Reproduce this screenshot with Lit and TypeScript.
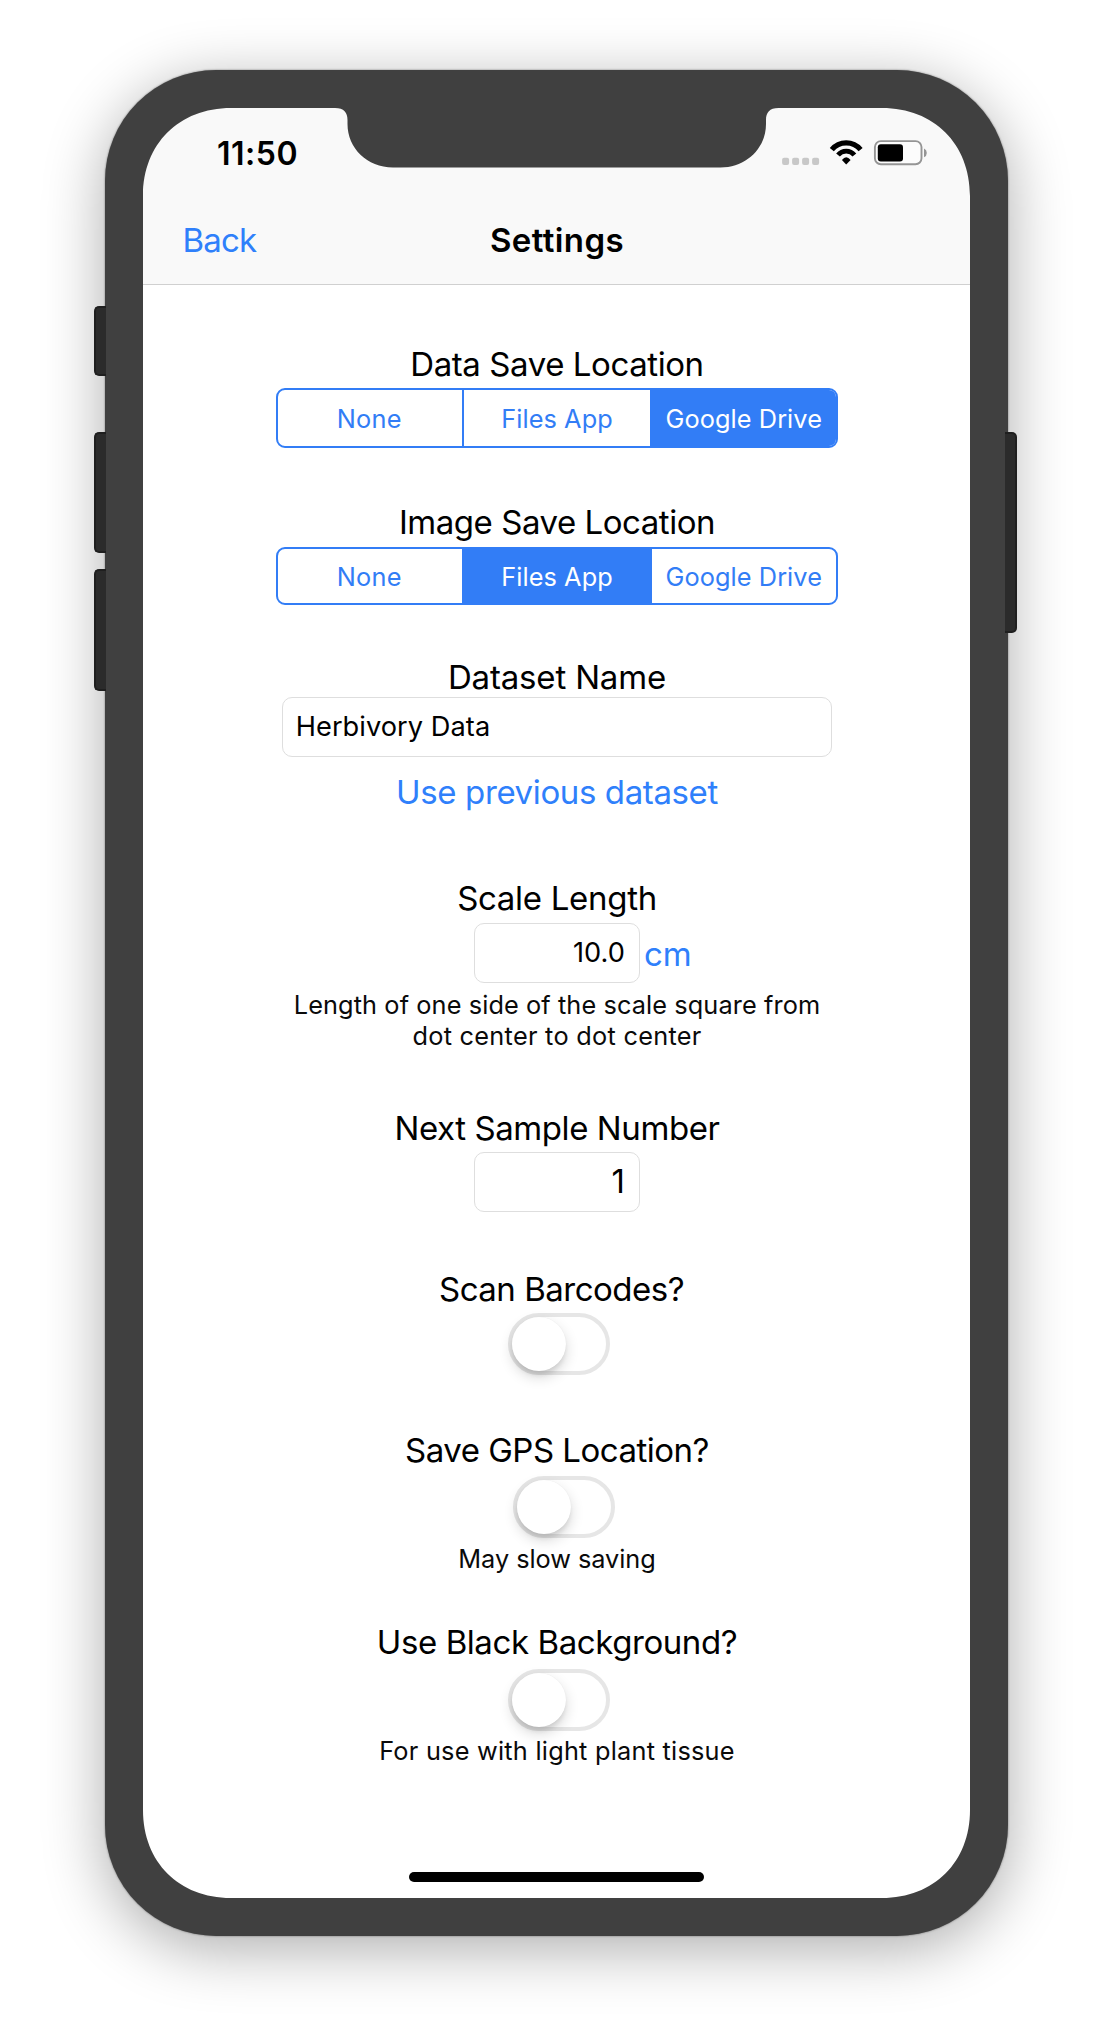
import { LitElement, html, css, svg } from "lit";
import { customElement, property, state } from "lit/decorators.js";
import { classMap } from "lit/directives/class-map.js";

@customElement("segmented-control")
export class SegmentedControl extends LitElement {
  @property({ attribute: false }) options: string[] = [];
  @property({ type: Number }) selected = 0;

  static styles = css`
    :host { display: block; }
    .track {
      box-sizing: border-box;
      width: 561.5px;
      height: 100%;
      display: grid;
      grid-template-columns: 184px 1fr 186px;
      border: 2px solid #327df6;
      border-radius: 9px;
      overflow: hidden;
      background: #fff;
    }
    .segment {
      display: flex;
      align-items: center;
      justify-content: center;
      border: 0;
      border-left: 2px solid #327df6;
      margin: 0;
      padding: 0;
      background: transparent;
      color: #327df6;
      font: 400 25.3px Inter, "Liberation Sans", sans-serif;
      letter-spacing: 0.08px;
    }
    .segment:first-child { border-left: 0; padding-right: 2px; letter-spacing: 0.28px; }
    .on { background: #327df6; color: #fff; }
  `;

  render() {
    return html`<div class="track">
      ${this.options.map((label, i) => html`<button
        class=${classMap({ segment: true, on: i === this.selected })}
        @click=${() => { this.selected = i; }}>${label}</button>`)}
    </div>`;
  }
}

@customElement("toggle-switch")
export class ToggleSwitch extends LitElement {
  @property({ type: Boolean }) on = false;

  static styles = css`
    :host { display: block; }
    .track {
      box-sizing: border-box;
      width: 102px;
      height: 62px;
      border: 4px solid #e6e6e6;
      border-radius: 31px;
      background: #fff;
      display: flex;
      cursor: pointer;
    }
    .knob {
      width: 54px;
      height: 54px;
      border-radius: 50%;
      background: #fff;
      box-shadow: 0 6px 14px rgba(0, 0, 0, 0.16), 0 5px 4px -1px rgba(0, 0, 0, 0.08), 0 0 1px rgba(0, 0, 0, 0.08);
    }
    .checked { justify-content: flex-end; background: #4cd964; }
  `;

  render() {
    return html`<div class=${classMap({ track: true, checked: this.on })}
      @click=${() => { this.on = !this.on; }}><div class="knob"></div></div>`;
  }
}

@customElement("app-root")
export class AppRoot extends LitElement {
  @state() private destinations = ["None", "Files App", "Google Drive"];

  static styles = css`
    :host {
      display: block;
      box-sizing: border-box;
      width: 1112px;
      height: 2038px;
      padding: 70px 0 0 105px;
      overflow: hidden;
      background: #fff;
      color: #000;
      font-family: Inter, "Liberation Sans", sans-serif;
    }
    .device {
      position: relative;
      box-sizing: border-box;
      width: 902.5px;
      height: 1866px;
      padding: 38px 37.5px 38px 38px;
      border-radius: 111px;
      background: #404040;
      box-shadow: 0 0 2px rgba(0, 0, 0, 0.5), 0 13px 62px rgba(0, 0, 0, 0.33);
    }
    .side {
      position: absolute;
      box-sizing: border-box;
      width: 12px;
      background: #2b2b2b;
      border: 2px solid #1f1f1f;
    }
    .left { left: -11px; border-right: 0; border-radius: 5px 0 0 5px; }
    .right { right: -9.5px; border-left: 0; border-radius: 0 5px 5px 0; }
    .mute { top: 236px; height: 70px; }
    .vol-up { top: 362px; height: 121px; }
    .vol-down { top: 499px; height: 122px; }
    .power { top: 362px; height: 201px; }
    .screen {
      width: 827px;
      height: 1790px;
      display: flex;
      flex-direction: column;
      background: #fff;
    }
    .bezel {
      position: absolute;
      left: 38px;
      top: 38px;
      pointer-events: none;
    }
    header {
      box-sizing: border-box;
      height: 177px;
      background: #f9f9f9;
      border-bottom: 1px solid #d0d0d0;
    }
    .status {
      box-sizing: border-box;
      height: 88px;
      padding: 25px 42px 0 74px;
      display: flex;
      justify-content: space-between;
      align-items: flex-start;
    }
    .time { margin-top: 1px; font-size: 32px; font-weight: 600; line-height: 40px; letter-spacing: 0.5px; }
    .indicators { display: block; margin-top: 5px; }
    nav {
      height: 87px;
      display: grid;
      grid-template-columns: 1fr auto 1fr;
      align-items: center;
      font-size: 33px;
      line-height: 40px;
    }
    .back { padding-left: 39.5px; letter-spacing: -0.8px; color: #2f80fb; }
    .title { padding-left: 1px; font-weight: 600; letter-spacing: 0.4px; }
    main {
      flex: 1;
      padding-left: 1px;
      display: flex;
      flex-direction: column;
      align-items: center;
    }
    section {
      width: 100%;
      display: flex;
      flex-direction: column;
      align-items: center;
    }
    .label { font-size: 33px; line-height: 40px; letter-spacing: -0.42px; white-space: nowrap; }
    .link { color: #2f80fb; }
    .caption {
      width: 540px;
      text-align: center;
      font-size: 25.3px;
      line-height: 30.5px;
      letter-spacing: 0.1px;
      color: #0a0a0a;
    }
    .loose { letter-spacing: 0.28px; }
    .field {
      box-sizing: border-box;
      height: 60px;
      padding: 0 14px 2px 12.5px;
      display: flex;
      align-items: center;
      border: 1px solid #dedede;
      border-radius: 10px;
      font-size: 27.2px;
      letter-spacing: 0.05px;
    }
    .wide { width: 549.5px; }
    .small { width: 166px; justify-content: flex-end; }
    .large-text { font-size: 33px; }
    .with-unit {
      width: 100%;
      display: grid;
      grid-template-columns: 1fr 166px 1fr;
      align-items: center;
    }
    .unit { grid-column: 3; padding: 2px 0 0 4px; font-size: 33px; line-height: 40px; color: #2f80fb; }
    .with-unit .field { grid-column: 2; }

    .data { padding-top: 59px; }
    .data segmented-control { height: 60px; margin-top: 4px; }
    .image { padding-top: 54px; }
    .image .label { letter-spacing: -0.46px; }
    .image segmented-control { height: 58px; margin-top: 5px; }
    .dataset { padding-top: 52px; }
    .dataset .name { letter-spacing: -0.17px; }
    .dataset .link { margin-top: 15px; letter-spacing: -0.38px; }
    .scale { padding-top: 66px; }
    .scale .label { letter-spacing: -0.3px; }
    .scale .with-unit { margin-top: 5px; }
    .scale .caption { margin-top: 7px; }
    .sample { padding-top: 57px; }
    .sample .field { margin-top: 4px; }
    .barcodes { padding-top: 57px; }
    .barcodes .label { padding-left: 9px; letter-spacing: -0.5px; }
    .barcodes toggle-switch { margin: 4px 0 0 4px; }
    .gps { padding-top: 55px; }
    .gps .label { letter-spacing: -0.5px; }
    .gps toggle-switch { margin: 6px 0 0 13.5px; }
    .gps .caption { margin-top: 6px; letter-spacing: -0.04px; }
    .background { padding-top: 47px; }
    .background toggle-switch { margin: 7px 0 0 4px; }
    .background .caption { margin-top: 5px; letter-spacing: 0.24px; }
    .home { padding-bottom: 16px; display: flex; justify-content: center; }
    .pill { width: 295.5px; height: 10px; border-radius: 5px; background: #000; }
  `;

  private bezel() {
    // One corner shape, mirrored into the four screen corners.
    const corner = "M-2 -2H88V0C36 0 0 36 0 88H-2Z";
    return html`<svg class="bezel" width="827" height="1790" viewBox="0 0 827 1790" fill="#404040">
      ${["", "translate(827 0) scale(-1 1)", "translate(0 1790) scale(1 -1)", "translate(827 1790) scale(-1 -1)"]
        .map((t) => svg`<path transform=${t} d=${corner} />`)}
      <path d="M192 -1V0C201 0 204.5 4.5 204.5 12V16C204.5 40 224 59.5 250 59.5H577.5C603.5 59.5 623 40 623 16V12C623 4.5 626.5 0 635.5 0V-1Z" />
    </svg>`;
  }

  private indicators() {
    return html`<svg class="indicators" width="148" height="30" viewBox="0 0 148 30">
      <g fill="#c8c8c8">
        ${[2.1, 12.1, 22.1, 32.1].map((x) => svg`<rect x=${x} y="19.8" width="7" height="7.2" rx="2" />`)}
      </g>
      <g fill="none" stroke="#000">
        <path stroke-width="5.2" d="M51.8 11.7A18.6 18.6 0 0 1 80.6 11.7" />
        <path stroke-width="4.8" d="M58 17A10.6 10.6 0 0 1 74.4 17" />
      </g>
      <path d="M61.9 22Q66.2 16.4 70.6 22L66.2 26.6Z" />
      <rect x="94.9" y="3.1" width="46.6" height="23.2" rx="6" fill="#fcfcfc" stroke="#959595" stroke-width="1.9" />
      <rect x="97.8" y="6.2" width="25.2" height="17.2" rx="3" />
      <path d="M144 10.6Q146.8 12 146.8 14.9T144 19.3Z" fill="#959595" />
    </svg>`;
  }

  render() {
    return html`<div class="device">
      <div class="side left mute"></div>
      <div class="side left vol-up"></div>
      <div class="side left vol-down"></div>
      <div class="side right power"></div>
      <div class="screen">
        <header>
          <div class="status"><span class="time">11:50</span>${this.indicators()}</div>
          <nav><span class="back">Back</span><span class="title">Settings</span></nav>
        </header>
        <main>
          <section class="data">
            <div class="label">Data Save Location</div>
            <segmented-control .options=${this.destinations} .selected=${2}></segmented-control>
          </section>
          <section class="image">
            <div class="label">Image Save Location</div>
            <segmented-control .options=${this.destinations} .selected=${1}></segmented-control>
          </section>
          <section class="dataset">
            <div class="label name">Dataset Name</div>
            <div class="field wide">Herbivory Data</div>
            <div class="label link">Use previous dataset</div>
          </section>
          <section class="scale">
            <div class="label">Scale Length</div>
            <div class="with-unit"><div class="field small">10.0</div><span class="unit">cm</span></div>
            <div class="caption">Length of one side of the scale square from<br /><span class="loose">dot center to dot center</span></div>
          </section>
          <section class="sample">
            <div class="label">Next Sample Number</div>
            <div class="field small large-text">1</div>
          </section>
          <section class="barcodes">
            <div class="label">Scan Barcodes?</div>
            <toggle-switch></toggle-switch>
          </section>
          <section class="gps">
            <div class="label">Save GPS Location?</div>
            <toggle-switch></toggle-switch>
            <div class="caption">May slow saving</div>
          </section>
          <section class="background">
            <div class="label">Use Black Background?</div>
            <toggle-switch></toggle-switch>
            <div class="caption">For use with light plant tissue</div>
          </section>
        </main>
        <div class="home"><div class="pill"></div></div>
      </div>
      ${this.bezel()}
    </div>`;
  }
}
